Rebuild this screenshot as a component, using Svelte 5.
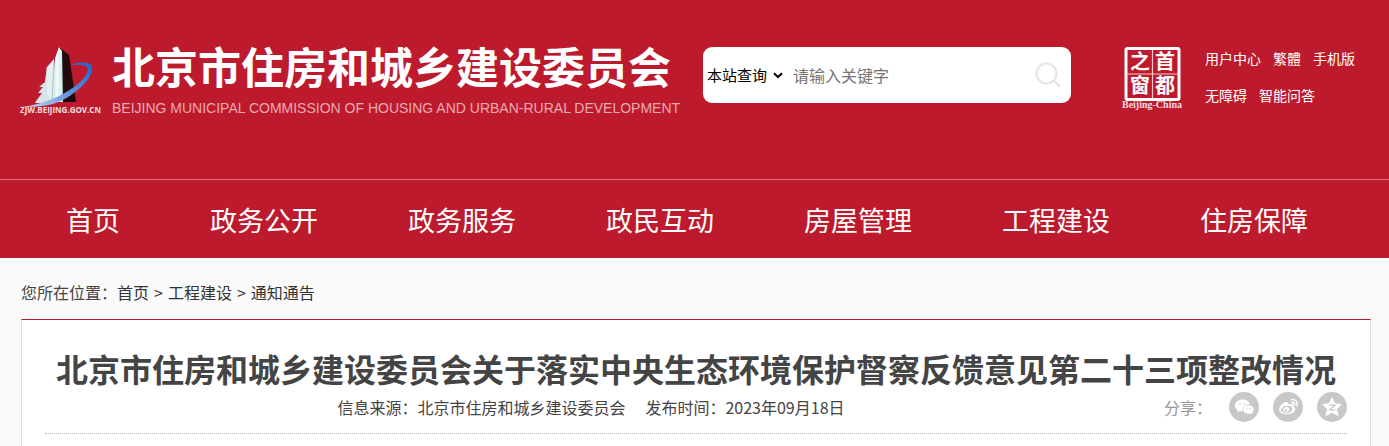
<script>
	const topLinks = [
		['用户中心', '繁體', '手机版'],
		['无障碍', '智能问答']
	];

	const navItems = ['首页', '政务公开', '政务服务', '政民互动', '房屋管理', '工程建设', '住房保障'];

	const crumbs = ['首页', '工程建设', '通知通告'];

	let keyword = '';
</script>

<header>
	<div class="top">
		<a class="brand" href="/">
			<svg class="tower" width="82" height="70" viewBox="0 0 82 70" aria-hidden="true">
				<defs>
					<linearGradient id="face" x1="0" x2="1">
						<stop offset="0" stop-color="#b9cfd4" />
						<stop offset="0.5" stop-color="#f4fdfd" />
						<stop offset="1" stop-color="#c4e4e6" />
					</linearGradient>
					<linearGradient id="ring" x1="0" y1="1" x2="1" y2="0">
						<stop offset="0" stop-color="#c9d8f2" />
						<stop offset="0.5" stop-color="#5c92d8" />
						<stop offset="1" stop-color="#1b66cf" />
					</linearGradient>
				</defs>
				<path d="M39 1 L49 9 L56 56 H40 Z" fill="#210b0d" />
				<path d="M39 1 L42 5 L43 56 H31 L35 12 Z" fill="url(#face)" />
				<path d="M34 13 L27 21 L24 48 L32 56 H34 Z" fill="#e3f1f2" />
				<path d="M27 20 L25 36 L19 41 L23 41 L18 47 L22 47 L16 55 L15 57 H34 L27 48 Z" fill="#d7e4e7" />
				<path d="M34 16 L32 55" stroke="#91aeb5" stroke-width="0.7" fill="none" />
				<path
					d="M51 19 C57 16 70 15 72 21 C74 33 52 52 33 58 C20 61 9 61 2 61 C23 58 40 51 54 41 C64 34 70 25 67 21 C64 18 58 19 51 19 Z"
					fill="url(#ring)"
				/>
				<text x="0" y="67">ZJW.BEIJING.GOV.CN</text>
			</svg>
			<span class="names">
				<span class="name">北京市住房和城乡建设委员会</span>
				<span class="name-en">BEIJING MUNICIPAL COMMISSION OF HOUSING AND URBAN-RURAL DEVELOPMENT</span>
			</span>
		</a>

		<form class="search" on:submit|preventDefault>
			<div class="scope">
				<select aria-label="查询范围">
					<option>本站查询</option>
				</select>
				<svg width="10" height="7" viewBox="0 0 10 7" aria-hidden="true">
					<path d="M1 1.2 L5 5 L9 1.2" fill="none" stroke="#000" stroke-width="2" />
				</svg>
			</div>
			<input type="text" placeholder="请输入关键字" aria-label="关键字" bind:value={keyword} />
			<button type="submit" aria-label="搜索">
				<svg width="26" height="26" viewBox="0 0 26 26">
					<circle cx="11.5" cy="11.5" r="10" fill="none" stroke="#e5e5e5" stroke-width="2" />
					<path d="M18.5 18.5 L24 24" stroke="#e5e5e5" stroke-width="2.4" stroke-linecap="round" />
				</svg>
			</button>
		</form>

		<div class="side">
			<a class="seal" href="/" aria-label="首都之窗">
				<svg width="62" height="66" viewBox="0 0 62 66">
					<rect x="5" y="3.5" width="53" height="51" rx="1.5" fill="none" stroke="#fff" stroke-width="3" />
					<path d="M31.5 5 V53 M6 29 H57" stroke="#f3c9ce" stroke-width="1.2" />
					<g class="seal-cn">
						<text x="19" y="24">之</text>
						<text x="44" y="24">首</text>
						<text x="19" y="48">窗</text>
						<text x="44" y="48">都</text>
					</g>
					<text class="seal-en" x="31" y="63">Beijing-China</text>
				</svg>
			</a>
			<div class="links">
				{#each topLinks as row}
					<div class="link-row">
						{#each row as link}
							<a href="/">{link}</a>
						{/each}
					</div>
				{/each}
			</div>
		</div>
	</div>

	<nav>
		{#each navItems as item}
			<a href="/">{item}</a>
		{/each}
	</nav>
</header>

<main>
	<div class="crumbs">
		<span>您所在位置：</span>
		{#each crumbs as crumb, i}
			{#if i > 0}<span class="sep">&gt;</span>{/if}
			<a href="/">{crumb}</a>
		{/each}
	</div>

	<article>
		<h1>北京市住房和城乡建设委员会关于落实中央生态环境保护督察反馈意见第二十三项整改情况</h1>
		<div class="meta">
			<div class="info">
				<span>信息来源：北京市住房和城乡建设委员会</span>
				<span>发布时间：2023年09月18日</span>
			</div>
			<div class="share">
				<span class="share-label">分享：</span>
				<button type="button" aria-label="微信">
					<svg width="30" height="30" viewBox="0 0 30 30">
						<path
							d="M13.5 7.5 C9 7.5 6 10 6 13.4 C6 15.4 7 17 8.6 18 L8 20.3 L10.8 19 C11.7 19.3 12.5 19.4 13.6 19.4 C13 15.5 16.4 12.2 21 12.3 C20.2 9.4 17.3 7.5 13.5 7.5 Z"
							fill="#fff"
						/>
						<path
							d="M19.3 13.2 C15.8 13.2 14.2 15.3 14.2 17.4 C14.2 20 16.7 21.8 19.4 21.8 C20.2 21.8 20.9 21.7 21.5 21.5 L23.6 22.6 L23.1 20.7 C24.1 19.9 24.7 18.8 24.7 17.5 C24.7 15 22.4 13.2 19.3 13.2 Z"
							fill="#fff"
						/>
						<g fill="#c8c8c8">
							<circle cx="11" cy="11.8" r="0.8" />
							<circle cx="15.5" cy="11.8" r="0.8" />
							<circle cx="17.6" cy="16.2" r="0.7" />
							<circle cx="21.4" cy="16.2" r="0.7" />
						</g>
					</svg>
				</button>
				<button type="button" aria-label="微博">
					<svg width="30" height="30" viewBox="0 0 30 30">
						<path
							d="M13 10 C10 10 6.2 14.3 6.2 17.4 C6.2 20.4 9.8 22.3 13.9 22.3 C19 22.3 22.4 19.3 22.4 17 C22.4 15.4 21.2 14.8 20.2 14.5 C20.6 13.2 20.4 12.2 19.4 11.9 C18.2 11.5 16.6 12 15.3 12.5 C15.8 10.8 14.9 10 13 10 Z"
							fill="#fff"
						/>
						<ellipse cx="13.7" cy="17.5" rx="5.6" ry="3.7" transform="rotate(-8 13.7 17.5)" fill="#c8c8c8" />
						<ellipse cx="13.2" cy="17.7" rx="3.2" ry="2.7" transform="rotate(-20 13.2 17.7)" fill="#fff" />
						<circle cx="12.6" cy="18.2" r="1.2" fill="#c8c8c8" />
						<path
							d="M18.5 7.6 C22.4 6.9 25.3 10.2 24 14 M18.9 10.3 C20.9 10 22.1 11.6 21.6 13.2"
							fill="none"
							stroke="#fff"
							stroke-width="1.5"
							stroke-linecap="round"
						/>
					</svg>
				</button>
				<button type="button" aria-label="QQ空间">
					<svg width="30" height="30" viewBox="0 0 30 30">
						<path
							d="M15 5.8 L17.8 11.8 L24.2 12.5 L19.5 17 L20.8 23.4 L15 20.2 L9.2 23.4 L10.5 17 L5.8 12.5 L12.2 11.8 Z"
							fill="#fff"
							stroke="#fff"
							stroke-linejoin="round"
						/>
						<path
							d="M12 13.3 C14 12.9 16 12.9 18 13.3 L12.6 17.6 C14.5 18.1 16.5 18.2 18.5 17.8"
							fill="none"
							stroke="#c8c8c8"
							stroke-width="1.3"
						/>
					</svg>
				</button>
			</div>
		</div>
	</article>
</main>

<style>
	:global(body) {
		margin: 0;
		background: #fafafa;
		font-family: 'Noto Sans CJK SC', sans-serif;
		color: #444;
	}

	a {
		color: inherit;
		text-decoration: none;
	}

	svg {
		display: block;
	}

	button {
		border: none;
		padding: 0;
		background: none;
		cursor: pointer;
	}

	header {
		background: #bd1a2d;
		color: #fff;
	}

	.top {
		display: flex;
		align-items: flex-start;
		padding: 45px 34px 61px 20px;
		border-bottom: 1px solid #d9707c;
	}

	.brand {
		display: flex;
		gap: 10px;
	}

	.tower {
		padding-top: 1px;
	}

	.tower text {
		font: 700 8px 'Open Sans', sans-serif;
		fill: #f6dde0;
	}

	.names {
		display: flex;
		flex-direction: column;
		white-space: nowrap;
	}

	.name {
		font-size: 43px;
		line-height: 40px;
		font-weight: 700;
	}

	.name-en {
		margin-top: 13px;
		font: 14px/20px 'Liberation Sans', sans-serif;
		color: #ecaab2;
	}

	.search {
		display: flex;
		align-items: center;
		box-sizing: border-box;
		width: 368px;
		height: 56px;
		margin: 2px 0 0 23px;
		padding: 0 10px 0 4px;
		border-radius: 9px;
		background: #fff;
	}

	.scope {
		display: flex;
		align-items: center;
		position: relative;
	}

	.scope svg {
		position: absolute;
		right: 0;
		pointer-events: none;
	}

	select {
		appearance: none;
		width: 76px;
		border: none;
		padding: 0;
		background: none;
		font: 15px/24px 'Noto Sans CJK SC', sans-serif;
		color: #000;
	}

	input {
		flex: 1;
		min-width: 0;
		border: none;
		padding: 0 0 0 10px;
		outline: none;
		background: none;
		font: 16px/24px 'Noto Sans CJK SC', sans-serif;
	}

	.side {
		display: flex;
		gap: 22px;
		margin-left: auto;
	}

	.seal-cn {
		font: 700 20px 'Liberation Serif', 'Noto Sans CJK SC', serif;
		fill: #fff;
		text-anchor: middle;
	}

	.seal-en {
		font: 700 10px 'Liberation Serif', serif;
		fill: #f6dde0;
		text-anchor: middle;
	}

	.links {
		display: flex;
		flex-direction: column;
		gap: 13px;
		padding-top: 1px;
		font-size: 14px;
		line-height: 24px;
	}

	.link-row {
		display: flex;
		gap: 12px;
	}

	nav {
		display: flex;
		gap: 90px;
		padding: 20px 66px 18px;
		font-size: 27px;
		line-height: 40px;
		white-space: nowrap;
	}

	main {
		padding: 0 18px 0 21px;
	}

	.crumbs {
		display: flex;
		padding: 22px 0 15px;
		font-size: 16px;
		line-height: 24px;
	}

	.crumbs a {
		color: #333;
	}

	.sep {
		margin: 0 5px;
	}

	article {
		padding: 28px 23px 12px;
		border: 1px solid #ddd;
		border-top-color: #bd1a2d;
		border-bottom: none;
		background: #fff;
	}

	h1 {
		margin: 0;
		font-size: 32px;
		line-height: 40px;
		text-align: center;
	}

	.meta {
		display: flex;
		align-items: center;
		padding: 3px 0 10px;
		border-bottom: 1px dotted #bbb;
	}

	.info {
		display: flex;
		flex: 1;
		justify-content: center;
		gap: 20px;
		padding-right: 27px;
		font-size: 16px;
		line-height: 32px;
	}

	.share {
		display: flex;
		align-items: center;
		gap: 14px;
		font-size: 16px;
		line-height: 24px;
		color: #999;
	}

	.share-label {
		padding-right: 3px;
	}

	.share button {
		border-radius: 50%;
		background: #c8c8c8;
	}
</style>
